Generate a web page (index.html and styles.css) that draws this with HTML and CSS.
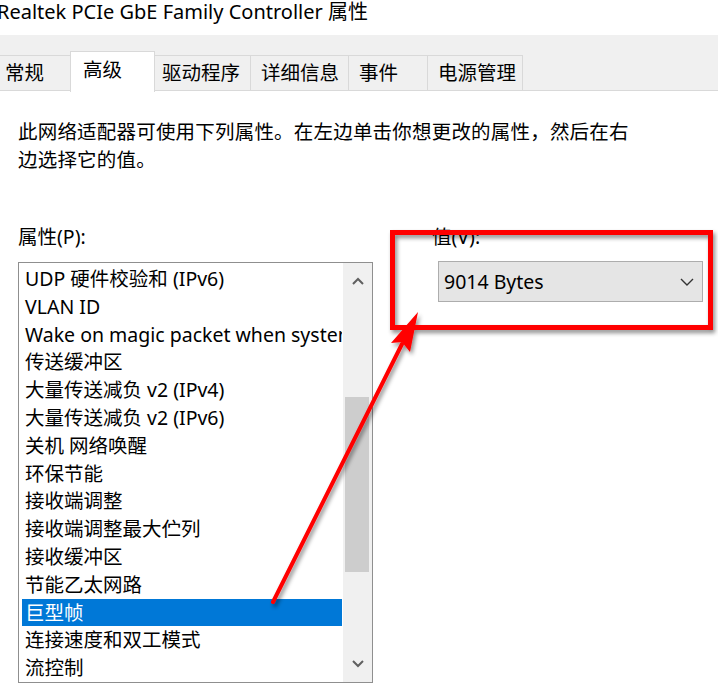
FILE: index.html
```html
<!DOCTYPE html>
<html lang="zh-CN">
<head>
    <meta charset="UTF-8">
    <meta name="viewport" content="width=device-width, initial-scale=1.0">
    <title>Realtek PCIe GbE Family Controller 属性</title>
    <link rel="stylesheet" href="styles.css">
</head>
<body>
    <div class="titlebar">Realtek PCIe GbE Family Controller 属性</div>

    <div class="tabs">
        <div class="tab tab-general">常规</div>
        <div class="tab tab-advanced active">高级</div>
        <div class="tab tab-driver">驱动程序</div>
        <div class="tab tab-details">详细信息</div>
        <div class="tab tab-events">事件</div>
        <div class="tab tab-power">电源管理</div>
    </div>

    <div class="page">
        <p class="intro">此网络适配器可使用下列属性。在左边单击你想更改的属性，然后在右<br>边选择它的值。</p>

        <div class="fields">
            <div class="field-props">
                <div class="label">属性(P):</div>
                <div class="listbox">
                    <ul class="items">
                        <li>UDP 硬件校验和 (IPv6)</li>
                        <li>VLAN ID</li>
                        <li>Wake on magic packet when system is in the S0ix power state</li>
                        <li>传送缓冲区</li>
                        <li>大量传送减负 v2 (IPv4)</li>
                        <li>大量传送减负 v2 (IPv6)</li>
                        <li>关机 网络唤醒</li>
                        <li>环保节能</li>
                        <li>接收端调整</li>
                        <li>接收端调整最大伫列</li>
                        <li>接收缓冲区</li>
                        <li>节能乙太网路</li>
                        <li class="selected">巨型帧</li>
                        <li>连接速度和双工模式</li>
                        <li>流控制</li>
                    </ul>
                    <div class="scrollbar">
                        <div class="scroll-btn">
                            <svg width="12" height="8" viewBox="0 0 12 8"><path d="M1 7 L6 2 L11 7" fill="none" stroke="#606060" stroke-width="2"/></svg>
                        </div>
                        <div class="scroll-track">
                            <div class="scroll-thumb"></div>
                        </div>
                        <div class="scroll-btn">
                            <svg width="12" height="8" viewBox="0 0 12 8"><path d="M1 1 L6 6 L11 1" fill="none" stroke="#606060" stroke-width="2"/></svg>
                        </div>
                    </div>
                </div>
            </div>

            <div class="field-value">
                <div class="label">值(V):</div>
                <div class="select">
                    <span>9014 Bytes</span>
                    <svg width="14" height="8" viewBox="0 0 14 8"><path d="M1 1 L7 7 L13 1" fill="none" stroke="#333" stroke-width="1.4"/></svg>
                </div>
            </div>
        </div>
    </div>

    <!-- red markup drawn over the dialog -->
    <svg class="markup" width="718" height="692" viewBox="0 0 718 692">
        <defs>
            <filter id="shadow" x="-20%" y="-20%" width="140%" height="140%">
                <feDropShadow dx="2" dy="3" stdDeviation="2" flood-color="#000" flood-opacity="0.45"/>
            </filter>
        </defs>
        <g filter="url(#shadow)">
            <rect x="392.5" y="232.5" width="318" height="95" fill="none" stroke="#ff0000" stroke-width="5"/>
            <line x1="273" y1="602" x2="402" y2="344" stroke="#ff0000" stroke-width="4" stroke-linecap="round"/>
            <polygon points="418,312 410,352 402,342 391,343" fill="#ff0000"/>
        </g>
    </svg>
</body>
</html>
```

FILE: styles.css
```css
body {
    margin: 0;
    width: 718px;
    height: 692px;
    overflow: hidden;
    position: relative;
    background-color: #fff;
    color: #000;
    font-family: "Noto Sans", "Noto Sans CJK SC", sans-serif;
    font-size: 19.5px;
}
.titlebar {
    height: 35px;
    line-height: 24px;
    font-size: 20px;
    text-indent: -3px;
    white-space: nowrap;
}
.tabs {
    display: flex;
    align-items: flex-end;
    height: 55px;
    background-color: #f0f0f0;
    border-bottom: 1px solid #d9d9d9;
}
.tab {
    box-sizing: border-box;
    height: 35px;
    margin-left: -1px;
    padding-left: 10px;
    line-height: 34px;
    border: 1px solid #d9d9d9;
    border-bottom: none;
    background-color: #f0f0f0;
    white-space: nowrap;
}
.tab.active {
    position: relative;
    z-index: 1;
    height: 41px;
    margin-bottom: -2px;
    padding-left: 12px;
    line-height: 36px;
    background-color: #fff;
}
.tab-general { margin-left: -6px; width: 77px; }
.tab-advanced { width: 85px; }
.tab-driver { width: 97px; padding-left: 7px; }
.tab-details { width: 99px; }
.tab-events { width: 80px; }
.tab-power { width: 96px; }
.page {
    padding: 27px 0 0 18px;
}
.intro {
    margin: 0;
    line-height: 28px;
    letter-spacing: 0.2px;
    white-space: nowrap;
}
.fields {
    display: flex;
    margin-top: 49px;
}
.label {
    line-height: 28px;
    white-space: nowrap;
}
.field-props {
    width: 355px;
}
.listbox {
    box-sizing: border-box;
    display: flex;
    height: 421px;
    margin-top: 11px;
    border: 1px solid #8f8f8f;
}
.items {
    flex: 1;
    min-width: 0;
    margin: 0;
    padding: 2px 1px 0 3px;
    list-style: none;
    overflow: hidden;
}
.items li {
    height: 27.8px;
    line-height: 27.8px;
    padding-left: 3px;
    white-space: nowrap;
    overflow: hidden;
}
.items li.selected {
    background-color: #0078d7;
    color: #fff;
}
.scrollbar {
    display: flex;
    flex-direction: column;
    width: 29px;
    background-color: #f0f0f0;
}
.scroll-btn {
    display: flex;
    align-items: center;
    justify-content: center;
    height: 36px;
}
.scroll-track {
    flex: 1;
    padding: 98px 3px 0 2px;
}
.scroll-thumb {
    height: 175px;
    background-color: #cdcdcd;
}
.field-value {
    margin-left: 59px;
}
.select {
    box-sizing: border-box;
    display: flex;
    align-items: center;
    justify-content: space-between;
    width: 265px;
    height: 41px;
    margin-top: 10px;
    margin-left: 6px;
    padding: 0 8px 0 5px;
    background-color: #e5e5e5;
    border: 1px solid #adadad;
}
.markup {
    position: absolute;
    left: 0;
    top: 0;
    pointer-events: none;
}
```
